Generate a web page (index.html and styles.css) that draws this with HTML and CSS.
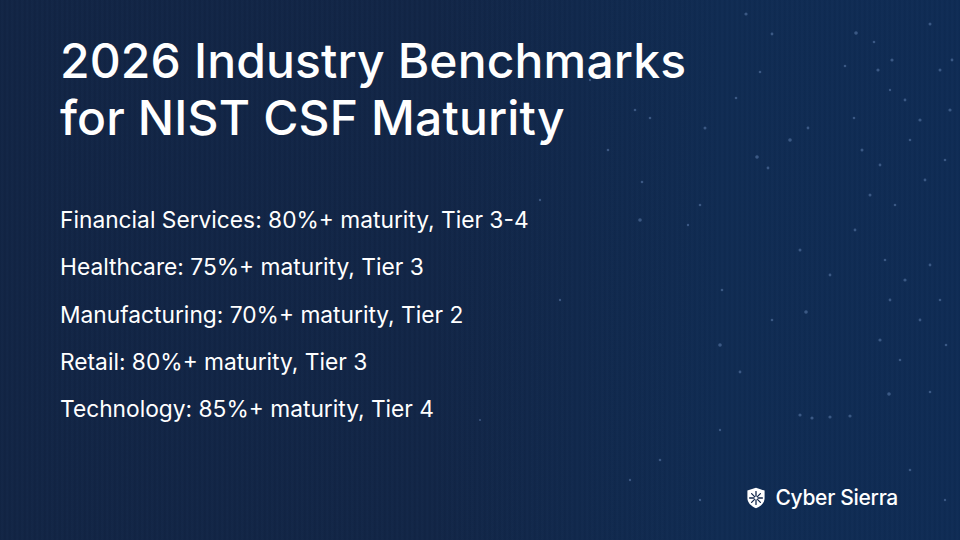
FILE: index.html
```html
<!DOCTYPE html>
<html lang="en">
<head>
<meta charset="utf-8">
<title>2026 Industry Benchmarks for NIST CSF Maturity</title>
<link rel="stylesheet" href="styles.css">
</head>
<body>
<div class="slide">
  <svg class="bg-dots" viewBox="0 0 960 540" preserveAspectRatio="none" aria-hidden="true">
    <g fill="#6f8fc0" opacity="0.45">
      <circle cx="746" cy="14" r="1.6"/><circle cx="772" cy="34" r="1.4"/><circle cx="856" cy="33" r="1.8"/>
      <circle cx="874" cy="42" r="1.3"/><circle cx="892" cy="60" r="1.6"/><circle cx="930" cy="24" r="1.5"/>
      <circle cx="952" cy="60" r="1.4"/><circle cx="845" cy="66" r="1.3"/><circle cx="878" cy="70" r="1.6"/>
      <circle cx="890" cy="90" r="1.2"/><circle cx="940" cy="70" r="1.5"/><circle cx="905" cy="100" r="1.4"/>
      <circle cx="920" cy="120" r="1.6"/><circle cx="854" cy="118" r="1.3"/><circle cx="862" cy="150" r="1.5"/>
      <circle cx="880" cy="165" r="1.4"/><circle cx="910" cy="140" r="1.3"/><circle cx="950" cy="110" r="1.6"/>
      <circle cx="790" cy="140" r="1.8"/><circle cx="808" cy="128" r="1.4"/><circle cx="705" cy="128" r="1.5"/>
      <circle cx="736" cy="98" r="1.3"/><circle cx="760" cy="72" r="1.3"/><circle cx="870" cy="195" r="1.5"/>
      <circle cx="895" cy="205" r="1.3"/><circle cx="925" cy="180" r="1.4"/><circle cx="945" cy="160" r="1.3"/>
      <circle cx="855" cy="230" r="1.4"/><circle cx="800" cy="250" r="1.5"/><circle cx="885" cy="260" r="1.3"/>
      <circle cx="905" cy="280" r="1.6"/><circle cx="930" cy="265" r="1.4"/><circle cx="650" cy="118" r="1.3"/>
      <circle cx="608" cy="150" r="1.3"/><circle cx="640" cy="220" r="1.8"/><circle cx="700" cy="205" r="1.3"/>
      <circle cx="642" cy="182" r="1.3"/><circle cx="722" cy="290" r="1.3"/><circle cx="830" cy="275" r="1.4"/>
      <circle cx="890" cy="300" r="1.4"/><circle cx="940" cy="300" r="1.3"/><circle cx="920" cy="320" r="1.4"/>
      <circle cx="806" cy="312" r="1.8"/><circle cx="720" cy="345" r="1.8"/><circle cx="772" cy="320" r="1.3"/>
      <circle cx="688" cy="225" r="1.2"/><circle cx="757" cy="157" r="1.8"/><circle cx="768" cy="168" r="1.4"/>
      <circle cx="880" cy="340" r="1.6"/><circle cx="900" cy="360" r="1.3"/><circle cx="946" cy="345" r="1.3"/>
      <circle cx="740" cy="372" r="1.4"/><circle cx="889" cy="394" r="1.8"/><circle cx="930" cy="392" r="1.3"/>
      <circle cx="800" cy="415" r="1.6"/><circle cx="812" cy="418" r="1.6"/><circle cx="830" cy="417" r="1.6"/>
      <circle cx="850" cy="416" r="1.6"/><circle cx="720" cy="430" r="1.2"/><circle cx="660" cy="460" r="1.3"/>
      <circle cx="630" cy="480" r="1.2"/><circle cx="910" cy="470" r="1.3"/><circle cx="945" cy="500" r="1.2"/>
      <circle cx="700" cy="500" r="1.2"/><circle cx="635" cy="110" r="1.3"/><circle cx="590" cy="80" r="1.2"/>
      <circle cx="540" cy="200" r="1.2"/><circle cx="560" cy="300" r="1.2"/><circle cx="480" cy="420" r="1.1"/>
    </g>
  </svg>
  <div class="content">
    <h1 class="title">2026 Industry Benchmarks<br>for NIST CSF Maturity</h1>
    <ul class="list">
      <li>Financial Services: 80%+ maturity, Tier 3-4</li>
      <li>Healthcare: 75%+ maturity, Tier 3</li>
      <li>Manufacturing: 70%+ maturity, Tier 2</li>
      <li>Retail: 80%+ maturity, Tier 3</li>
      <li>Technology: 85%+ maturity, Tier 4</li>
    </ul>
    <div class="footer">
      <div class="brand">
        <svg class="brand-icon" viewBox="0 0 20 22" aria-hidden="true">
          <path d="M10 0.8 L18.6 3.6 V11 C18.6 15.8 14.8 19.2 10 21.2 C5.2 19.2 1.4 15.8 1.4 11 V3.6 Z" fill="#ffffff"/>
          <g stroke="#12264a" stroke-width="1.3" stroke-linecap="round">
            <line x1="10" y1="4.6" x2="10" y2="17.4"/>
            <line x1="3.6" y1="11" x2="16.4" y2="11"/>
            <line x1="5.6" y1="6.6" x2="14.4" y2="15.4"/>
            <line x1="14.4" y1="6.6" x2="5.6" y2="15.4"/>
          </g>
          <circle cx="10" cy="11" r="1.6" fill="#ffffff"/>
        </svg>
        <span class="brand-name">Cyber Sierra</span>
      </div>
    </div>
  </div>
</div>
</body>
</html>
```

FILE: styles.css
```css
* {
  box-sizing: border-box;
}

html, body {
  margin: 0;
  padding: 0;
  width: 960px;
  height: 540px;
  overflow: hidden;
}

body {
  font-family: "Inter", "Noto Sans", "Liberation Sans", sans-serif;
  color: #ffffff;
}

.slide {
  position: relative;
  width: 960px;
  height: 540px;
  overflow: hidden;
  background:
    repeating-linear-gradient(90deg, rgba(80, 120, 180, 0.00) 0px, rgba(80, 120, 180, 0.05) 2px, rgba(80, 120, 180, 0.00) 5px),
    linear-gradient(90deg, #112342 0%, #112444 45%, #0f2a50 75%, #0e2a52 100%);
}

.bg-dots {
  position: absolute;
  inset: 0;
  width: 960px;
  height: 540px;
}

.content {
  position: relative;
  height: 100%;
  display: flex;
  flex-direction: column;
  padding: 32px 60px 30px 60px;
}

.title {
  margin: 0;
  font-size: 48px;
  font-weight: 500;
  line-height: 57px;
  letter-spacing: 0.15px;
}

.list {
  list-style: none;
  margin: 62px 0 0 0;
  padding: 0;
  display: flex;
  flex-direction: column;
  gap: 23.25px;
}

.list li {
  font-size: 22.75px;
  line-height: 24px;
  font-weight: 400;
}

.footer {
  margin-top: auto;
  display: flex;
  justify-content: flex-end;
  padding-right: 2px;
}

.brand {
  display: flex;
  align-items: center;
  gap: 9px;
}

.brand-icon {
  width: 20px;
  height: 22px;
}

.brand-name {
  font-size: 21px;
  font-weight: 500;
  letter-spacing: -0.3px;
}
```
